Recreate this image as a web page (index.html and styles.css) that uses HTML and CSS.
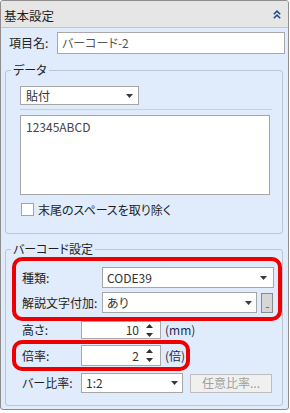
FILE: index.html
```html
<!DOCTYPE html>
<html lang="ja">
<head>
<meta charset="utf-8">
<link rel="stylesheet" href="styles.css">
</head>
<body>
<div class="panel">
  <div class="header">
    <span class="title">基本設定</span>
    <svg class="collapse" width="8" height="9" viewBox="0 0 8 9"><path d="M0.8 4.3 L4 1.2 L7.2 4.3 M0.8 8.3 L4 5.2 L7.2 8.3" fill="none" stroke="#1f4b94" stroke-width="1.6"/></svg>
  </div>
  <div class="body">
    <div class="name-row">
      <span class="lbl name-lbl">項目名:</span>
      <div class="field name-field">バーコード-2</div>
    </div>

    <fieldset class="group g-data">
      <legend>データ</legend>
      <div class="data-inner">
        <div class="select paste">貼付<svg class="arrow" width="7" height="4" viewBox="0 0 7 4"><path d="M0 0H7L3.5 4Z" fill="#3a3a3a"/></svg></div>
        <div class="sep"></div>
        <div class="textarea">12345ABCD</div>
        <label class="check"><span class="box"></span>末尾のスペースを取り除く</label>
      </div>
    </fieldset>

    <fieldset class="group g-bar">
      <legend>バーコード設定</legend>
      <div class="bar-inner">
        <div class="mark mark1">
          <div class="frow">
            <span class="lbl wide">種類:</span>
            <div class="select sel-type">CODE39<svg class="arrow" width="7" height="4" viewBox="0 0 7 4"><path d="M0 0H7L3.5 4Z" fill="#3a3a3a"/></svg></div>
          </div>
          <div class="frow">
            <span class="lbl wide">解説文字付加:</span>
            <div class="select sel-text">あり<svg class="arrow" width="7" height="4" viewBox="0 0 7 4"><path d="M0 0H7L3.5 4Z" fill="#3a3a3a"/></svg></div>
            <button class="dots">...</button>
          </div>
        </div>

        <div class="frow plain row-h">
          <span class="lbl narrow">高さ:</span>
          <div class="field num num-h">10<span class="spin"><svg width="7" height="4" viewBox="0 0 7 4"><path d="M0 4H7L3.5 0Z" fill="#333"/></svg><svg width="7" height="4" viewBox="0 0 7 4"><path d="M0 0H7L3.5 4Z" fill="#333"/></svg></span></div>
          <span class="unit">(mm)</span>
        </div>

        <div class="mark mark2">
          <div class="frow">
            <span class="lbl narrow">倍率:</span>
            <div class="field num num-r">2<span class="spin"><svg width="7" height="4" viewBox="0 0 7 4"><path d="M0 4H7L3.5 0Z" fill="#333"/></svg><svg width="7" height="4" viewBox="0 0 7 4"><path d="M0 0H7L3.5 4Z" fill="#333"/></svg></span></div>
            <span class="unit">(倍)</span>
          </div>
        </div>

        <div class="frow plain row-ratio">
          <span class="lbl narrow">バー比率:</span>
          <div class="select sel-ratio">1:2<svg class="arrow" width="7" height="4" viewBox="0 0 7 4"><path d="M0 0H7L3.5 4Z" fill="#3a3a3a"/></svg></div>
          <button class="btn-disabled" disabled>任意比率...</button>
        </div>
      </div>
    </fieldset>
  </div>
</div>
</body>
</html>
```
FILE: styles.css
```css
* { box-sizing: border-box; }
html, body { margin: 0; padding: 0; background: #fff; }
body {
  font-family: "Noto Sans CJK JP", "Noto Sans", sans-serif;
  font-size: 12px;
  line-height: 16px;
  color: #222;
  font-feature-settings: "palt";
}
.panel {
  width: 289px;
  height: 410px;
  border: 1px solid #8d8d8d;
  border-radius: 3px;
  background: #e0ebfb;
  overflow: hidden;
  display: flex;
  flex-direction: column;
}
.header {
  height: 27px;
  flex: none;
  background: #e6e6e6;
  border-bottom: 1px solid #c4c4c4;
  display: flex;
  align-items: center;
  justify-content: space-between;
  padding: 0 7px 0 3px;
}
.title { font-size: 12.5px; padding-top: 4px; color: #1e1e1e; }
.collapse { display: block; }
.body {
  flex: 1;
  padding: 4px 3px 3px 4px;
  display: flex;
  flex-direction: column;
}
.name-row {
  display: flex;
  align-items: center;
  height: 22px;
  padding-left: 4px;
}
.lbl { flex: none; color: #1e1e1e; white-space: nowrap; }
.name-lbl { width: 48px; }
.field {
  background: #fff;
  border: 1px solid #a9a9a9;
  color: #444;
}
.name-field {
  flex: 1;
  height: 22px;
  padding: 2px 4px;
  color: #555;
}
.group {
  margin: 0;
  padding: 0;
  border: 1px solid #bcc5d0;
  border-radius: 3px;
  width: 278px;
  min-inline-size: 0;
}
.group legend {
  margin-left: 5px;
  padding: 0 2px;
  line-height: 16px;
  color: #1e1e1e;
}
.g-data { margin-top: 8px; }
.data-inner { padding: 8px 0 17px 14px; }
.select {
  display: flex;
  align-items: center;
  justify-content: space-between;
  background: #fff;
  border: 1px solid #a6a6a6;
  padding: 0 5px 0 5px;
  color: #333;
}
.paste { width: 119px; height: 19px; }
.sep { width: 252px; height: 1px; margin-top: 4px; background: #c8cfd8; }
.textarea {
  width: 250px;
  height: 80px;
  margin-top: 5px;
  background: #fff;
  border: 1px solid #a6a6a6;
  padding: 3px 5px;
  color: #444;
}
.check {
  display: flex;
  align-items: center;
  height: 13px;
  margin-top: 8px;
  color: #1e1e1e;
}
.box {
  width: 13px;
  height: 13px;
  margin: 0 4px 0 1px;
  background: #fff;
  border: 1px solid #a3a3a3;
}
.g-bar { margin-top: 7px; }
.bar-inner { padding: 0 0 12px 6px; }
.mark {
  border: 4px solid #ee0000;
  border-radius: 10px;
}
.mark1 {
  width: 270px;
  height: 64px;
  padding: 6px 4px 4px 6px;
  display: flex;
  flex-direction: column;
  gap: 4px;
}
.mark2 {
  width: 178px;
  height: 31px;
  margin-top: 1px;
  padding: 1px 0 1px 6px;
}
.frow { display: flex; align-items: center; }
.mark1 .frow { height: 21px; }
.wide { width: 80px; }
.narrow { width: 59px; }
.sel-type { width: 172px; height: 21px; padding-left: 4px; padding-right: 6px; }
.sel-text { width: 155px; height: 21px; padding-left: 4px; padding-right: 4px; }
.dots {
  width: 12px;
  height: 20px;
  margin: 0 0 0 4px;
  padding: 0 0 2px 0;
  background: #d6d6d6;
  border: 1px solid #8a8a8a;
  font-family: "Liberation Sans", sans-serif;
  font-size: 8px;
  line-height: 8px;
  color: #222;
  display: flex;
  align-items: flex-end;
  justify-content: center;
  letter-spacing: -1px;
}
.plain { padding-left: 10px; }
.row-h { height: 18px; }
.num {
  width: 80px;
  display: flex;
  align-items: center;
  justify-content: flex-end;
  padding-right: 7px;
  color: #333;
}
.num-h { height: 18px; }
.num-r { height: 21px; }
.spin {
  display: flex;
  flex-direction: column;
  justify-content: space-between;
  height: 13px;
  margin-left: 7px;
}
.spin svg { display: block; }
.unit { margin-left: 4px; color: #1b2c4e; }
.row-ratio { margin-top: 2px; height: 20px; }
.sel-ratio { width: 102px; height: 20px; padding-left: 4px; padding-right: 4px; }
.btn-disabled {
  width: 82px;
  height: 19px;
  margin-left: 7px;
  padding: 0;
  background: #f0f0f0;
  border: 1px solid #bdbdbd;
  color: #a0a0a0;
  font-family: inherit;
  font-size: 12px;
  line-height: 16px;
  font-feature-settings: "palt";
}
```
